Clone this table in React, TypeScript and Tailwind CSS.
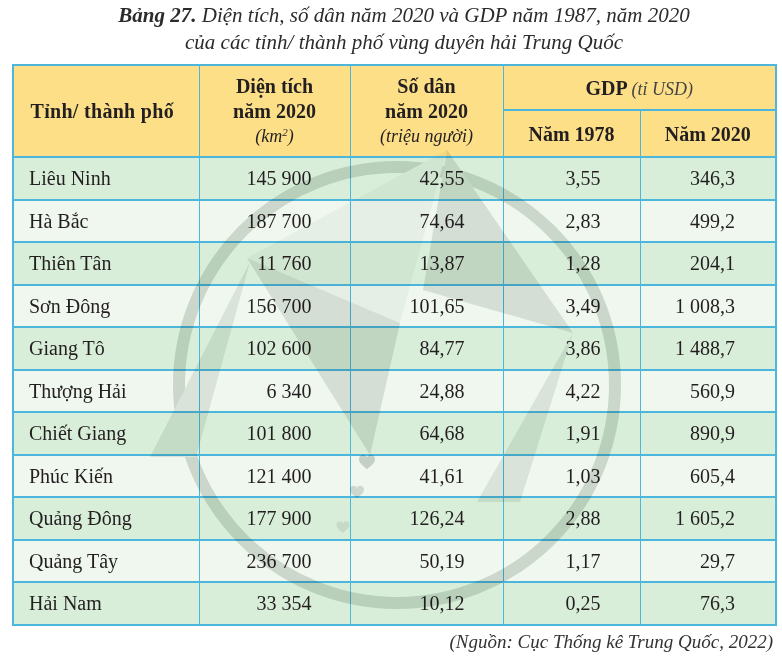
import React from 'react';

const rows = [
  ['Liêu Ninh', '145 900', '42,55', '3,55', '346,3'],
  ['Hà Bắc', '187 700', '74,64', '2,83', '499,2'],
  ['Thiên Tân', '11 760', '13,87', '1,28', '204,1'],
  ['Sơn Đông', '156 700', '101,65', '3,49', '1 008,3'],
  ['Giang Tô', '102 600', '84,77', '3,86', '1 488,7'],
  ['Thượng Hải', '6 340', '24,88', '4,22', '560,9'],
  ['Chiết Giang', '101 800', '64,68', '1,91', '890,9'],
  ['Phúc Kiến', '121 400', '41,61', '1,03', '605,4'],
  ['Quảng Đông', '177 900', '126,24', '2,88', '1 605,2'],
  ['Quảng Tây', '236 700', '50,19', '1,17', '29,7'],
  ['Hải Nam', '33 354', '10,12', '0,25', '76,3'],
];

const cell = 'border-x border-x-[#4cb6dc] border-y-2 border-y-[#4cb6dc]';

function Heart({ x, y, s, o }: { x: number; y: number; s: number; o: number }) {
  // small heart drawn around (x, y)
  const k = s / 20;
  return (
    <path
      transform={`translate(${x - 10 * k} ${y - 9 * k}) scale(${k})`}
      d="M10 18 C4 13 0 10 0 5.5 C0 2 2.5 0 5.2 0 C7.3 0 9 1.2 10 3 C11 1.2 12.7 0 14.8 0 C17.5 0 20 2 20 5.5 C20 10 16 13 10 18 Z"
      fill="#d3d7d3"
      opacity={o}
    />
  );
}

function Watermark() {
  return (
    <svg
      className="absolute inset-0 pointer-events-none mix-blend-multiply"
      width={782}
      height={658}
      viewBox="0 0 782 658"
    >
      <circle cx={397} cy={385} r={218} fill="none" stroke="#dadeda" strokeWidth={12} />
      {/* light facet */}
      <polygon points="247,258 447,150 400,323" fill="#f6f7f6" />
      {/* darker facets */}
      <polygon points="247,258 400,323 370,455" fill="#e3e6e3" />
      <polygon points="447,150 573,333 423,290" fill="#e3e6e3" />
      <polygon points="573,333 477,502 520,502" fill="#e8ebe8" />
      <polygon points="150,457 250,262 196,457" fill="#e8ebe8" />
      <Heart x={367} y={462} s={16} o={1} />
      <Heart x={357} y={492} s={14} o={0.8} />
      <Heart x={343} y={527} s={13} o={0.5} />
    </svg>
  );
}

export default function App() {
  return (
    <div className="relative w-[782px] h-[658px] bg-white text-[#231f20] font-['Liberation_Serif',serif]">
      <div className="pl-[26px] pt-[2px] text-center italic text-[21px] leading-[27px] text-[#2b2b2b]">
        <div>
          <span className="font-bold">Bảng 27.</span> Diện tích, số dân năm 2020 và GDP năm 1987, năm 2020
        </div>
        <div>của các tỉnh/ thành phố vùng duyên hải Trung Quốc</div>
      </div>

      <div className="ml-[12px] mt-[8px] w-[763px]">
        <table className="w-full table-fixed border-collapse text-[20px] border-2 border-[#4cb6dc]">
          <colgroup>
            <col className="w-[186px]" />
            <col className="w-[151px]" />
            <col className="w-[153px]" />
            <col className="w-[137px]" />
            <col className="w-[136px]" />
          </colgroup>
          <thead className="bg-[#fcdf87]">
            <tr className="h-[45px]">
              <th rowSpan={2} className={`${cell} font-bold text-center pr-[8px] tracking-[0.3px]`}>
                Tỉnh/ thành phố
              </th>
              <th rowSpan={2} className={`${cell} font-bold text-center leading-[25px]`}>
                <div>Diện tích</div>
                <div>năm 2020</div>
                <div className="font-normal italic text-[18px]">
                  (km<sup className="text-[11px]">2</sup>)
                </div>
              </th>
              <th rowSpan={2} className={`${cell} font-bold text-center leading-[25px]`}>
                <div>Số dân</div>
                <div>năm 2020</div>
                <div className="font-normal italic text-[18px]">(triệu người)</div>
              </th>
              <th colSpan={2} className={`${cell} font-bold text-center`}>
                GDP <span className="font-normal italic text-[18px] text-[#444]">(tỉ USD)</span>
              </th>
            </tr>
            <tr className="h-[47px]">
              <th className={`${cell} font-bold text-center`}>Năm 1978</th>
              <th className={`${cell} font-bold text-center`}>Năm 2020</th>
            </tr>
          </thead>
          <tbody>
            {rows.map((r, i) => (
              <tr key={r[0]} className={`h-[42.5px] ${i % 2 === 0 ? 'bg-[#d8eed9]' : 'bg-[#eff7ef]'}`}>
                <td className={`${cell} pl-[15px]`}>{r[0]}</td>
                <td className={`${cell} text-right pr-[38px]`}>{r[1]}</td>
                <td className={`${cell} text-right pr-[38px]`}>{r[2]}</td>
                <td className={`${cell} text-right pr-[39px]`}>{r[3]}</td>
                <td className={`${cell} text-right pr-[40px]`}>{r[4]}</td>
              </tr>
            ))}
          </tbody>
        </table>
      </div>

      <p className="mt-[2px] pr-[9px] text-right italic text-[19px] text-[#333]">
        (Nguồn: Cục Thống kê Trung Quốc, 2022)
      </p>

      <Watermark />
    </div>
  );
}
